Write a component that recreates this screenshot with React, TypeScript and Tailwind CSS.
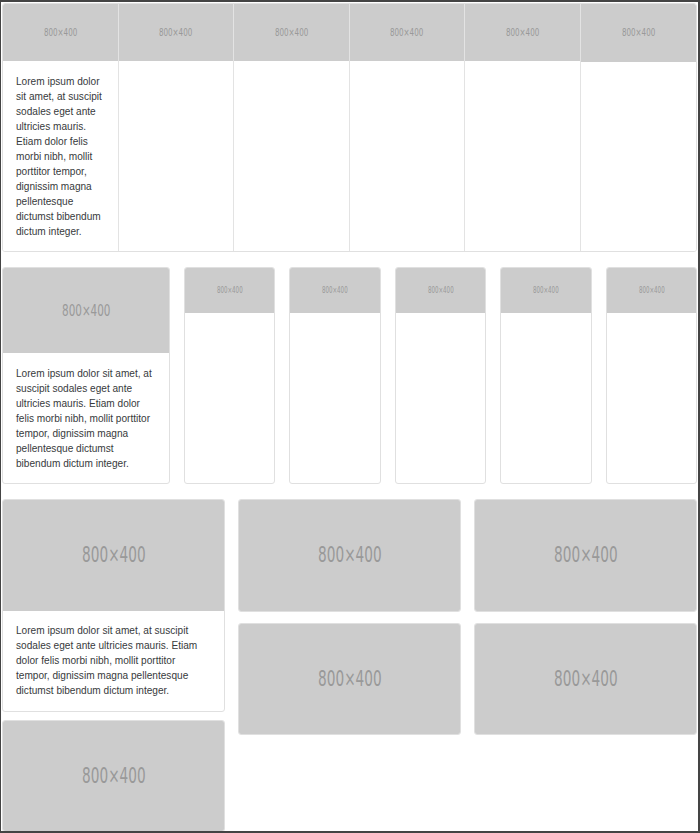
const lorem =
  "Lorem ipsum dolor sit amet, at suscipit sodales eget ante ultricies mauris. Etiam dolor felis morbi nibh, mollit porttitor tempor, dignissim magna pellentesque dictumst bibendum dictum integer."

function Label({ size }: { size: string }) {
  return (
    <span
      className={`${size} inline-block scale-x-[0.65] leading-none text-[#999999]`}
      style={{ fontFamily: '"DejaVu Sans", sans-serif' }}
    >
      800×400
    </span>
  )
}

function Placeholder({ size }: { size: string }) {
  return (
    <div className="flex aspect-[2/1] w-full items-center justify-center bg-[#cccccc]">
      <Label size={size} />
    </div>
  )
}

function Body() {
  return (
    <div className="px-[13px] py-[12.5px]">
      <p className="text-[10.1px] leading-[15px] text-[#373a3c]">{lorem}</p>
    </div>
  )
}

export default function App() {
  return (
    <div
      className="box-border h-[833px] w-[700px] overflow-hidden border-t-2 border-r-2 border-b-2 border-l border-[#444444] bg-white pt-px pr-px pl-px"
      style={{ fontFamily: '"Liberation Sans", Arial, sans-serif' }}
    >
      {/* card group */}
      <div className="grid grid-cols-6 divide-x divide-[#e3e3e3] overflow-hidden rounded-[3px] border border-[#e0e0e0]">
        {[0, 1, 2, 3, 4, 5].map((i) => (
          <div key={i} className="bg-white">
            <Placeholder size="text-[11px]" />
            {i === 0 && <Body />}
          </div>
        ))}
      </div>

      {/* card deck */}
      <div className="mt-[15px] grid grid-cols-[168px_repeat(5,minmax(0,1fr))] gap-[14px]">
        <div className="overflow-hidden rounded-[3px] border border-[#e0e0e0] bg-white">
          <div className="flex h-[85px] items-center justify-center bg-[#cccccc]">
            <Label size="text-[16px]" />
          </div>
          <Body />
        </div>
        {[0, 1, 2, 3, 4].map((i) => (
          <div key={i} className="overflow-hidden rounded-[3px] border border-[#e0e0e0] bg-white">
            <Placeholder size="text-[8.5px]" />
          </div>
        ))}
      </div>

      {/* card columns */}
      <div className="mt-[15px] grid grid-cols-3 items-start gap-x-[13px]">
        <div className="flex flex-col gap-[8px]">
          <div className="overflow-hidden rounded-[3px] border border-[#e0e0e0] bg-white">
            <Placeholder size="text-[21px]" />
            <Body />
          </div>
          <div className="overflow-hidden rounded-[3px] border border-[#e0e0e0]">
            <Placeholder size="text-[21px]" />
          </div>
        </div>
        {[0, 1].map((c) => (
          <div key={c} className="flex flex-col gap-[11px]">
            <div className="overflow-hidden rounded-[3px] border border-[#e0e0e0]">
              <Placeholder size="text-[21px]" />
            </div>
            <div className="overflow-hidden rounded-[3px] border border-[#e0e0e0]">
              <Placeholder size="text-[21px]" />
            </div>
          </div>
        ))}
      </div>
    </div>
  )
}
